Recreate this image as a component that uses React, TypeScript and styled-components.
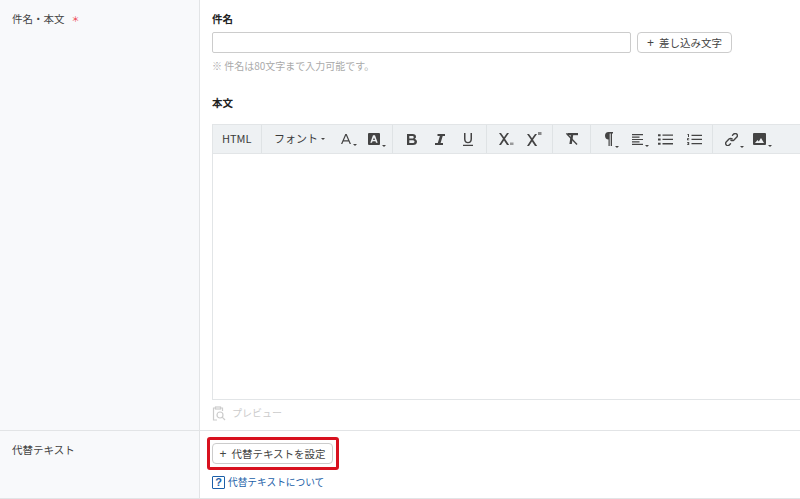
import React from 'react';
import styled, {createGlobalStyle} from 'styled-components';

const Global = createGlobalStyle`
  html, body {
    margin: 0;
    padding: 0;
    background: #fff;
    overflow: hidden;
  }
  body {
    font-family: "Noto Sans CJK JP", "Liberation Sans", sans-serif;
    color: #333;
    font-size: 10.5px;
  }
`;

const Page = styled.div`
  width: 800px;
  height: 499px;
  overflow: hidden;
`;

const Row = styled.div<{$h: number}>`
  display: grid;
  grid-template-columns: 200px 1fr;
  box-sizing: border-box;
  height: ${p => p.$h}px;
  border-bottom: 1px solid #e2e4e6;
`;

const Head = styled.div<{$top: number}>`
  background: #f8f9fb;
  border-right: 1px solid #e2e4e6;
  padding: ${p => p.$top}px 0 0 12px;
  font-size: 10.5px;
  line-height: 16px;
  color: #444;
  display: flex;
  align-items: flex-start;
`;

const Required = styled.span`
  color: #ee3b45;
  margin-left: 7px;
  font-size: 8px;
`;

const Body = styled.div`
  padding-left: 12px;
  min-width: 0;
`;

const Label = styled.div<{$top: number}>`
  font-size: 10.5px;
  font-weight: 700;
  line-height: 16px;
  color: #222;
  padding-top: ${p => p.$top}px;
`;

const InputRow = styled.div`
  display: flex;
  gap: 6px;
  margin-top: 5px;
`;

const TextInput = styled.div`
  width: 417px;
  height: 19px;
  border: 1px solid #ccc;
  border-radius: 2px;
  background: #fff;
`;

const Btn = styled.div<{$w: number}>`
  display: inline-flex;
  align-items: center;
  justify-content: center;
  box-sizing: border-box;
  width: ${p => p.$w}px;
  height: 21px;
  border: 1px solid #ccc;
  border-radius: 4px;
  background: #fff;
  font-size: 10.5px;
  color: #444;
  white-space: nowrap;
`;

const Plus = styled.span`
  margin-right: 5px;
  font-family: "Liberation Sans", sans-serif;
  font-size: 12px;
  line-height: 1;
`;

const Note = styled.div`
  margin-top: 6px;
  font-size: 10px;
  line-height: 14px;
  color: #aaa;
`;

const Editor = styled.div`
  margin-top: 13px;
  width: 640px;
  height: 276px;
  box-sizing: border-box;
  border: 1px solid #e2e5e7;
  background: #fff;
`;

const Toolbar = styled.div`
  display: flex;
  height: 28px;
  background: #eef1f3;
  border-bottom: 1px solid #e2e5e7;
`;

const Group = styled.div<{$w: number; $last?: boolean}>`
  display: flex;
  align-items: center;
  box-sizing: border-box;
  flex: 0 0 ${p => p.$w}px;
  border-right: ${p => (p.$last ? '0' : '1px solid #dfe3e5')};
  color: #3a3a3a;
  font-size: 11px;
`;

const Tool = styled.span<{$ml: number; $w?: number}>`
  display: flex;
  align-items: flex-end;
  gap: 2px;
  flex: none;
  margin-left: ${p => p.$ml}px;
  width: ${p => (p.$w ? `${p.$w}px` : 'auto')};
  line-height: 1;
  white-space: nowrap;
`;

const TextTool = styled(Tool)`
  padding-bottom: 2px;
`;

const Caret = styled.i`
  display: block;
  width: 0;
  height: 0;
  margin-bottom: -2px;
  border-left: 2px solid transparent;
  border-right: 2px solid transparent;
  border-top: 2px solid #444;
`;

const FontCaret = styled(Caret)`
  margin: 0 0 4px 1px;
`;

const Preview = styled.div`
  display: flex;
  align-items: center;
  gap: 6px;
  margin-top: 5px;
  font-size: 10px;
  color: #ccc;
  line-height: 16px;
`;

const Highlight = styled.div`
  display: inline-flex;
  margin: 6px 0 0 -5px;
  padding: 3px 3px 3px 2px;
  border: 3px solid #d8111f;
  border-radius: 3px;
`;

const HelpLine = styled.div`
  display: flex;
  align-items: center;
  gap: 3px;
  margin-top: 4px;
  font-size: 9.7px;
  line-height: 16px;
  color: #1c5fa8;
`;

const HelpIcon = styled.span`
  display: flex;
  align-items: center;
  justify-content: center;
  box-sizing: border-box;
  width: 13px;
  height: 13px;
  border: 1.5px solid #1c5fa8;
  border-radius: 1px;
  font-family: "Liberation Sans", sans-serif;
  font-weight: 700;
  font-size: 11px;
  color: #1c5fa8;
`;

const Ico = ({ml, w, h, caret, children}: {ml: number; w: number; h: number; caret?: boolean; children: React.ReactNode}) => (
  <Tool $ml={ml}>
    <svg width={w} height={h} viewBox={`0 0 ${w} ${h}`} fill="#444">{children}</svg>
    {caret && <Caret />}
  </Tool>
);

const X = 'M0 0h2l3 4.300L8 0h2L6 5.800 10.200 12H8L5 7.500 2 12H0l4-6.200z';

const App = () => (
  <Page>
    <Global />
    <Row $h={431}>
      <Head $top={11}>件名・本文<Required>＊</Required></Head>
      <Body>
        <Label $top={11}>件名</Label>
        <InputRow>
          <TextInput />
          <Btn $w={95}><Plus>+</Plus>差し込み文字</Btn>
        </InputRow>
        <Note>※ 件名は80文字まで入力可能です。</Note>
        <Label $top={22}>本文</Label>
        <Editor>
          <Toolbar>
            <Group $w={49}><TextTool $ml={9}>HTML</TextTool></Group>
            <Group $w={131}>
              <TextTool $ml={12} $w={67}>フォント<FontCaret /></TextTool>
              <Ico ml={0} w={10} h={10} caret>
                <path d="M4.300 0h1.400L10 10H8.700L7.600 7.400H2.400L1.300 10H0zM2.900 6.200h4.200L5 1.400z" />
              </Ico>
              <Ico ml={11} w={12} h={12} caret>
                <path fillRule="evenodd" d="M1 0h10a1 1 0 0 1 1 1v10a1 1 0 0 1-1 1H1a1 1 0 0 1-1-1V1a1 1 0 0 1 1-1zM5 2.300L2.300 9.700h1.700l.5-1.500h3l.5 1.500h1.700L7 2.300zM6 4.500l1 2.500H5z" />
              </Ico>
            </Group>
            <Group $w={94}>
              <Ico ml={14} w={10} h={11}>
                <path fillRule="evenodd" d="M0 0h5.600C7.800 0 9 1 9 2.800c0 1-.5 1.800-1.400 2.200C9 5.300 10 6.300 10 7.700 10 9.700 8.500 11 6 11H0zM2.300 1.900v2.500h2.900c1 0 1.500-.5 1.500-1.250S6.200 1.900 5.200 1.900zM2.300 6.200v2.900h3.200c1.200 0 2-.6 2-1.450S6.700 6.200 5.500 6.200z" />
              </Ico>
              <Ico ml={18} w={10} h={11}>
                <path d="M2.500 0H10v2H7.700L5.600 9H8v2H0V9h2.800L4.900 2H2.500z" />
              </Ico>
              <Ico ml={18} w={10} h={13}>
                <path d="M1 0h1.500v6c0 2 .9 3 2.500 3s2.500-1 2.500-3V0H9v6c0 2.800-1.500 4.300-4 4.300S1 8.800 1 6zM0 11.700h10V13H0z" />
              </Ico>
            </Group>
            <Group $w={66}>
              <Ico ml={12} w={15} h={12}>
                <path d={X} />
                <rect x="11" y="9.500" width="3.500" height="2.500" opacity=".5" />
              </Ico>
              <Ico ml={13} w={15} h={14}>
                <path d={X} transform="translate(0 2)" />
                <rect x="11" y="0" width="3.500" height="3" opacity=".6" />
              </Ico>
            </Group>
            <Group $w={38}>
              <Ico ml={12} w={13} h={12}>
                <path d="M2.500 0H13v2.200H2.500z" />
                <path d="M5.800 2h2.400L6.800 11H4.400z" />
                <path d="M.8.800L2 0l10.500 11-1 1z" />
              </Ico>
            </Group>
            <Group $w={122}>
              <Ico ml={14} w={8} h={14} caret>
                <path fillRule="evenodd" d="M3.500 0H8v1.400H7V14H5.700V1.400h-1V14H3.500V7.500C1.300 7.500 0 6 0 3.800S1.300 0 3.500 0z" />
              </Ico>
              <Ico ml={13} w={11} h={11} caret>
                <path d="M0 0h11v1.200H0zM0 2.450h7.500v1.200H0zM0 4.900h11v1.200H0zM0 7.350h7.500v1.200H0zM0 9.800h11V11H0z" />
              </Ico>
              <Ico ml={9} w={15} h={11}>
                <path d="M0 .2h2.600v2H0zM4.500.5H15v1.300H4.500zM0 4.500h2.600v2H0zM4.500 4.800H15v1.300H4.500zM0 8.800h2.600v2H0zM4.500 9.100H15v1.300H4.500z" />
              </Ico>
              <Ico ml={14} w={15} h={11}>
                <path d="M.5 0H2v3H1V.9H.5zM0 4.200h2.200v.8H1v.5h1.200v.8H0zM0 8h2.200v3H0v-.7h1.200v-.5H.5v-.6h.7v-.5H0zM4.500.7H15V2H4.500zM4.500 4.800H15v1.300H4.500zM4.500 8.900H15v1.300H4.500z" />
              </Ico>
            </Group>
            <Group $w={120} $last>
              <Ico ml={12} w={13} h={13} caret>
                <g fill="none" stroke="#444" strokeWidth="1.400" strokeLinecap="round">
                  <path d="M7.500 2.200l1-1c1-1 2.300-1 3.200-.1s.9 2.200-.1 3.200L9 6.900c-1 1-2.300 1-3.200.1" />
                  <path d="M5.500 10.800l-1 1c-1 1-2.300 1-3.200.1s-.9-2.200.1-3.200L4 6.100c1-1 2.300-1 3.200-.1" />
                </g>
              </Ico>
              <Ico ml={9} w={13} h={12} caret>
                <path fillRule="evenodd" d="M1 0h11a1 1 0 0 1 1 1v10a1 1 0 0 1-1 1H1a1 1 0 0 1-1-1V1a1 1 0 0 1 1-1zM2 10h9L8 5 5.800 8.500 4.500 7z" />
              </Ico>
            </Group>
          </Toolbar>
        </Editor>
        <Preview>
          <svg width="14" height="15" viewBox="0 0 14 15" fill="none" stroke="#ccc" strokeWidth="1.200">
            <path d="M5 14H1.500V2h2M8.500 2h2v3" />
            <rect x="3.500" y="1" width="5" height="2" />
            <circle cx="8" cy="9" r="3" />
            <path d="M10.200 11.200L13 14" />
          </svg>
          プレビュー
        </Preview>
      </Body>
    </Row>
    <Row $h={68}>
      <Head $top={11}>代替テキスト</Head>
      <Body>
        <Highlight><Btn $w={121}><Plus>+</Plus>代替テキストを設定</Btn></Highlight>
        <HelpLine><HelpIcon>?</HelpIcon>代替テキストについて</HelpLine>
      </Body>
    </Row>
  </Page>
);

export default App;
